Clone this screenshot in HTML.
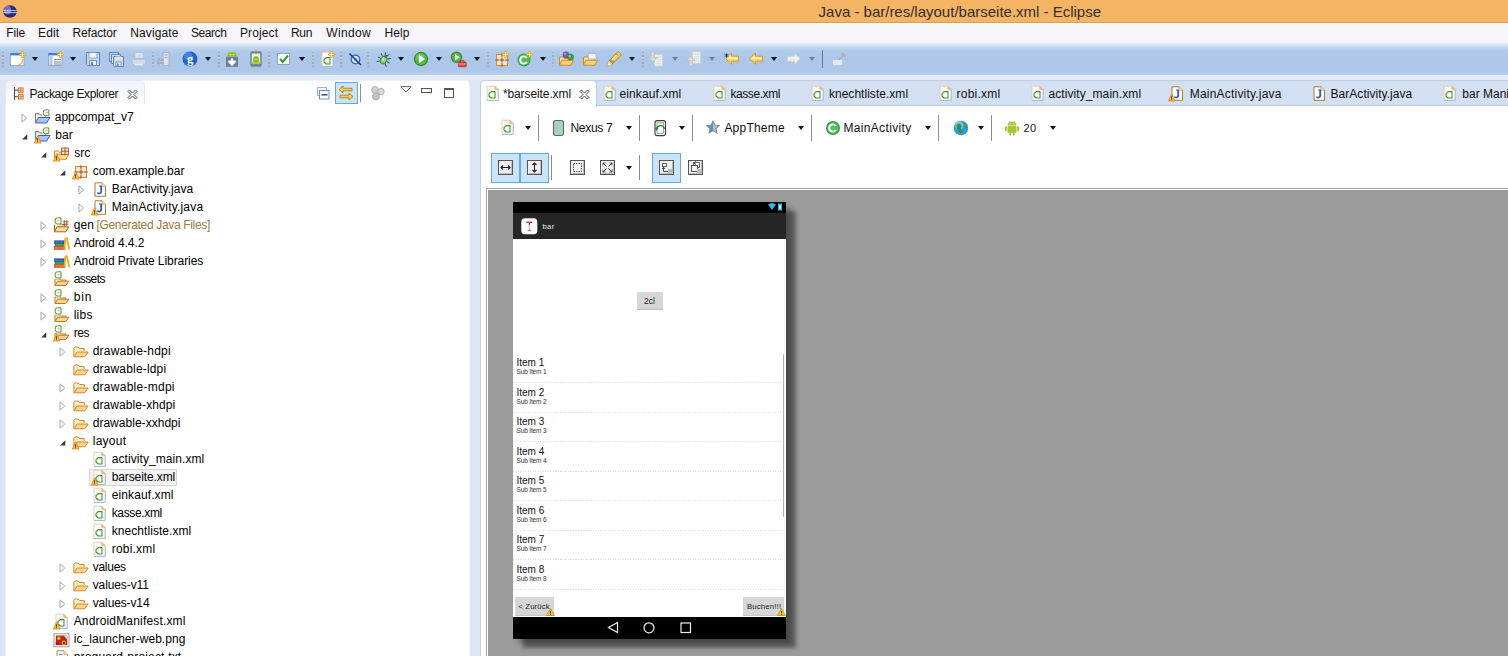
<!DOCTYPE html>
<html lang="en"><head><meta charset="utf-8"><title>Java - bar/res/layout/barseite.xml - Eclipse</title>
<style>
html,body{margin:0;padding:0}
body{width:1508px;height:656px;overflow:hidden;position:relative;background:#dde5f6;font-family:"Liberation Sans", sans-serif;font-size:12px}
#root{position:absolute;left:0;top:0;width:1508px;height:656px;overflow:hidden}
#root div,#root span{position:absolute}
.t{white-space:nowrap;display:block}
svg{display:block;overflow:visible}
</style></head><body><div id="root">
<div style="left:0px;top:0px;width:1508px;height:656px;background:#dde5f6"></div>
<div style="left:0px;top:0px;width:1508px;height:22px;background:#f4b463"></div>
<div style="left:0px;top:22px;width:1508px;height:1px;background:#cfa552"></div>
<div style="left:3px;top:5px;line-height:0"><svg width="14" height="13" viewBox="0 0 14 13"><ellipse cx="7" cy="6.5" rx="6.8" ry="6.2" fill="#2b2a80"/><ellipse cx="4.5" cy="5" rx="3.6" ry="4.2" fill="#8f86cf" opacity=".75"/><path d="M.3 5.6h13.4M.3 7.6h13.4" stroke="#dfe6ff" stroke-width=".8"/></svg></div>
<span id="t1" class="t" style="left:818.55px;top:4.00px;height:16px;line-height:16px;font-size:15px;color:#303030;letter-spacing:-0.003px;">Java - bar/res/layout/barseite.xml - Eclipse</span>
<div style="left:0px;top:23px;width:1508px;height:19px;background:#f6f6fb"></div>
<span id="t2" class="t" style="left:6.199999999999999px;top:25.04px;height:16px;line-height:16px;font-size:12px;color:#111;letter-spacing:-0.081px;">File</span>
<span id="t3" class="t" style="left:38.0px;top:25.04px;height:16px;line-height:16px;font-size:12px;color:#111;letter-spacing:0.137px;">Edit</span>
<span id="t4" class="t" style="left:72.5px;top:25.04px;height:16px;line-height:16px;font-size:12px;color:#111;letter-spacing:-0.151px;">Refactor</span>
<span id="t5" class="t" style="left:130.20000000000002px;top:25.04px;height:16px;line-height:16px;font-size:12px;color:#111;letter-spacing:0.132px;">Navigate</span>
<span id="t6" class="t" style="left:190.9px;top:25.04px;height:16px;line-height:16px;font-size:12px;color:#111;letter-spacing:-0.406px;">Search</span>
<span id="t7" class="t" style="left:240.0px;top:25.04px;height:16px;line-height:16px;font-size:12px;color:#111;letter-spacing:0.107px;">Project</span>
<span id="t8" class="t" style="left:290.9px;top:25.04px;height:16px;line-height:16px;font-size:12px;color:#111;letter-spacing:-0.258px;">Run</span>
<span id="t9" class="t" style="left:326.2px;top:25.04px;height:16px;line-height:16px;font-size:12px;color:#111;letter-spacing:0.363px;">Window</span>
<span id="t10" class="t" style="left:384.4px;top:25.04px;height:16px;line-height:16px;font-size:12px;color:#111;letter-spacing:0.137px;">Help</span>
<div style="left:0px;top:42px;width:1508px;height:33px;background:linear-gradient(to bottom,#f2f4fb 0,#dfe7f6 2px,#c8d8f0 5px,#b5cdec 8px,#adc7ea 12px,#adc7ea 29px,#bcd0ed 33px)"></div>
<div style="left:0px;top:75px;width:1508px;height:5px;background:#e6ebf8"></div>
<div style="left:2px;top:51.5px;width:1.5px;height:16px;opacity:.85;background:repeating-linear-gradient(to bottom,#b5a58f 0 1.500px,transparent 1.500px 3.500px)"></div>
<div style="left:10px;top:51px;line-height:0"><svg width="16" height="16" viewBox="0 0 16 16"><rect x=".5" y="2.5" width="13.5" height="12" fill="#fdfdff" stroke="#9aa7bd" stroke-width="1"/><rect x=".5" y="2" width="13.5" height="2.4" fill="#3d7fd0"/><path d="M13 8 Q13 13 8 14.5" stroke="#e8b030" stroke-width="1.2" fill="none"/><path d="M12.5 0v7M9 3.5h7" stroke="#e6a817" stroke-width="2.2"/><path d="M12.5 1v5M10 3.5h5" stroke="#fff2a8" stroke-width=".9"/></svg></div>
<div style="left:32px;top:57px;width:0;height:0;border-left:3.5px solid transparent;border-right:3.5px solid transparent;border-top:4px solid #111"></div>
<div style="left:48px;top:51px;line-height:0"><svg width="16" height="16" viewBox="0 0 16 16"><rect x=".5" y="2.5" width="13.5" height="12" fill="#fdfdff" stroke="#9aa7bd" stroke-width="1"/><rect x=".5" y="2" width="13.5" height="2.4" fill="#3d7fd0"/><rect x="1.5" y="5" width="3" height="9" fill="#a9c8ee"/><path d="M6 8.5h7M6 11h7M6 13h7" stroke="#7b8496" stroke-width="1"/><path d="M12.5 0v7M9 3.5h7" stroke="#e6a817" stroke-width="2.2"/><path d="M12.5 1v5M10 3.5h5" stroke="#fff2a8" stroke-width=".9"/></svg></div>
<div style="left:70px;top:57px;width:0;height:0;border-left:3.5px solid transparent;border-right:3.5px solid transparent;border-top:4px solid #111"></div>
<div style="left:85px;top:51px;line-height:0"><svg width="16" height="16" viewBox="0 0 16 16"><path d="M1.5 1.5h13v13h-12l-1-1z" fill="#c9d8ee" stroke="#5f83b5" stroke-width="1"/><rect x="4" y="1.5" width="8" height="5.5" fill="#f4f1ee" stroke="#5f83b5" stroke-width=".6"/><rect x="4.5" y="9.5" width="7" height="5" fill="#e9eef7" stroke="#5f83b5" stroke-width=".8"/><rect x="6" y="11" width="2" height="3" fill="#5f83b5"/></svg></div>
<div style="left:108px;top:51px;line-height:0"><svg width="16" height="16" viewBox="0 0 16 16"><path d="M1.5 1.5h9v9h-9z" fill="#d7e2f3" stroke="#5f83b5" stroke-width="1"/><path d="M3.5 3.5h9v9h-9z" fill="#d7e2f3" stroke="#5f83b5" stroke-width="1"/><path d="M5.5 5.5h10v10h-9l-1-1z" fill="#c9d8ee" stroke="#5f83b5" stroke-width="1"/><rect x="7.5" y="5.5" width="6" height="3.5" fill="#f1e4d6"/><rect x="8" y="11" width="5" height="4.5" fill="#e9eef7" stroke="#5f83b5" stroke-width=".7"/><rect x="9" y="12.5" width="1.6" height="2.6" fill="#5f83b5"/></svg></div>
<div style="left:131px;top:51px;line-height:0"><svg width="16" height="16" viewBox="0 0 16 16"><g opacity=".75"><rect x="4" y="1.5" width="8" height="6" fill="#f4f6fa" stroke="#b7c0cf"/><path d="M6 4h4M6 6h4" stroke="#c0c6d2"/><path d="M1.5 8.5h13v5h-13z" fill="#dfe4ec" stroke="#bcc4d1"/><rect x="3.5" y="12" width="9" height="2.5" fill="#f6f7fa" stroke="#c3cad6" stroke-width=".7"/></g></svg></div>
<div style="left:152px;top:51.5px;width:1.5px;height:16px;opacity:.85;background:repeating-linear-gradient(to bottom,#b5a58f 0 1.500px,transparent 1.500px 3.500px)"></div>
<div style="left:156px;top:51px;line-height:0"><svg width="16" height="16" viewBox="0 0 16 16"><g opacity=".8"><rect x="7" y="1.5" width="6" height="13" fill="#e8ebf0" stroke="#a8afba"/><path d="M8.5 4h3M8.5 6.5h3" stroke="#9ba3af"/><path d="M1 9h7M1 12h7" stroke="#9aa2ae" stroke-width="1.6"/><path d="M3 7v8" stroke="#a8afba" stroke-width="1.4"/></g></svg></div>
<div style="left:182px;top:51px;line-height:0"><svg width="16" height="16" viewBox="0 0 16 16"><circle cx="8" cy="8" r="7.5" fill="#1f63c4"/><circle cx="6" cy="5" r="4" fill="#5d9cec" opacity=".55"/><text x="8" y="12.2" font-family="Liberation Serif, serif" font-size="12.5" font-weight="bold" fill="#fff" text-anchor="middle">g</text></svg></div>
<div style="left:205px;top:57px;width:0;height:0;border-left:3.5px solid transparent;border-right:3.5px solid transparent;border-top:4px solid #111"></div>
<div style="left:218px;top:51.5px;width:1.5px;height:16px;opacity:.85;background:repeating-linear-gradient(to bottom,#b5a58f 0 1.500px,transparent 1.500px 3.500px)"></div>
<div style="left:224px;top:51px;line-height:0"><svg width="16" height="16" viewBox="0 0 16 16"><path d="M3 5.5a5 4.5 0 0 1 10 0z" fill="#97c024"/><path d="M4.5 1l1.2 1.8M11.5 1l-1.2 1.8" stroke="#97c024" stroke-width=".8"/><rect x="2" y="5.800" width="12" height="10" fill="#6d7d90"/><circle cx="6.300" cy="3.600" r=".6" fill="#fff"/><circle cx="9.700" cy="3.600" r=".6" fill="#fff"/><path d="M8 7.5v5M5 10.5l3 3.2 3-3.2z" stroke="#fff" stroke-width="2" fill="#fff" stroke-linejoin="round"/></svg></div>
<div style="left:248px;top:51px;line-height:0"><svg width="16" height="16" viewBox="0 0 16 16"><rect x="2.300" y=".3" width="11.400" height="15.400" rx="1.600" fill="#76838f"/><rect x="3.8" y="2.5" width="8.4" height="10" fill="#e9f1d9"/><path d="M5 8a3 2.8 0 0 1 6 0z" fill="#8bbd1f"/><rect x="5" y="8.4" width="6" height="3" fill="#8bbd1f"/><rect x="3.8" y="11" width="8.4" height="1.5" fill="#a6ce39"/></svg></div>
<div style="left:268px;top:51.5px;width:1.5px;height:16px;opacity:.85;background:repeating-linear-gradient(to bottom,#b5a58f 0 1.500px,transparent 1.500px 3.500px)"></div>
<div style="left:276px;top:51px;line-height:0"><svg width="16" height="16" viewBox="0 0 16 16"><rect x="1.5" y="2.5" width="12" height="11" fill="#fff" stroke="#8fa0bb"/><path d="M4 8l2.7 3L12 4.5" stroke="#2aa02a" stroke-width="2" fill="none"/></svg></div>
<div style="left:299px;top:57px;width:0;height:0;border-left:3.5px solid transparent;border-right:3.5px solid transparent;border-top:4px solid #111"></div>
<div style="left:312px;top:51.5px;width:1.5px;height:16px;opacity:.85;background:repeating-linear-gradient(to bottom,#b5a58f 0 1.500px,transparent 1.500px 3.500px)"></div>
<div style="left:319px;top:51px;line-height:0"><svg width="16" height="16" viewBox="0 0 16 16"><path d="M3 1.200h8l3.200 3.200v11h-11.200z" fill="#fdfeff"/><path d="M3 15.400v-14.200h8" fill="none" stroke="#ecc4a8" stroke-width=".9"/><path d="M14.200 4.400v11h-11.200" fill="none" stroke="#9fb2d6" stroke-width="1"/><path d="M10.800 1.200v3.400h3.400z" fill="#f8b878" stroke="#f0a050" stroke-width=".6"/><path d="M11 6.600h-3.800l-2.200 2v2.400l2.200 2h3.800z" fill="none" stroke="#3f8f1f" stroke-width="1.050" stroke-linejoin="round"/><path d="M12.5 0v7M9 3.5h7" stroke="#e6a817" stroke-width="2.2"/><path d="M12.5 1v5M10 3.5h5" stroke="#fff2a8" stroke-width=".9"/></svg></div>
<div style="left:340px;top:51.5px;width:1.5px;height:16px;opacity:.85;background:repeating-linear-gradient(to bottom,#b5a58f 0 1.500px,transparent 1.500px 3.500px)"></div>
<div style="left:347px;top:51px;line-height:0"><svg width="16" height="16" viewBox="0 0 16 16"><circle cx="8.5" cy="8.5" r="4.2" fill="#dfeaf8" stroke="#3f6fb5" stroke-width="1.6"/><circle cx="8.5" cy="8.5" r="1.6" fill="#7aa2da"/><path d="M2.5 2.5l11.5 11.5" stroke="#1f3a8a" stroke-width="1.5"/></svg></div>
<div style="left:367px;top:51.5px;width:1.5px;height:16px;opacity:.85;background:repeating-linear-gradient(to bottom,#b5a58f 0 1.500px,transparent 1.500px 3.500px)"></div>
<div style="left:376px;top:51px;line-height:0"><svg width="16" height="16" viewBox="0 0 16 16"><g transform="rotate(28 8 8.5)"><path d="M5.300 6.500L2.500 4.500M5 9H1.500M5.300 11.500l-2.800 2.300M10.700 6.500l2.800-2M11 9h3.500M10.700 11.500l2.800 2.300M7 4L5.800 1.500M9 4l1.200-2.500" stroke="#1f4f5f" stroke-width=".9" fill="none"/><ellipse cx="8" cy="9.300" rx="3" ry="4" fill="#8fd070" stroke="#2f6f3a" stroke-width=".8"/><circle cx="8" cy="4.800" r="1.600" fill="#3f7f4a"/><ellipse cx="7.300" cy="8.500" rx="1" ry="1.800" fill="#e0f5c8" opacity=".85"/></g></svg></div>
<div style="left:398px;top:57px;width:0;height:0;border-left:3.5px solid transparent;border-right:3.5px solid transparent;border-top:4px solid #111"></div>
<div style="left:413px;top:51px;line-height:0"><svg width="16" height="16" viewBox="0 0 16 16"><circle cx="8" cy="8" r="7.200" fill="#2e8b35"/><circle cx="8" cy="8" r="5.900" fill="#55b848"/><circle cx="7" cy="6" r="3.500" fill="#8fd67a" opacity=".5"/><path d="M6 3.800v8.400l6-4.200z" fill="#fff"/></svg></div>
<div style="left:436px;top:57px;width:0;height:0;border-left:3.5px solid transparent;border-right:3.5px solid transparent;border-top:4px solid #111"></div>
<div style="left:450px;top:51px;line-height:0"><svg width="16" height="16" viewBox="0 0 16 16"><circle cx="6.500" cy="6.300" r="5.700" fill="#2e8b35"/><circle cx="6.500" cy="6.300" r="4.500" fill="#55b848"/><path d="M5 3v6.600l4.800-3.300z" fill="#fff"/><rect x="8.300" y="11" width="8" height="4.800" rx=".8" fill="#e0453a" stroke="#a82018" stroke-width=".6"/><path d="M10.500 11v-1.300h3.500v1.300" stroke="#c0281e" fill="none" stroke-width=".9"/><path d="M8.300 13h8" stroke="#f8c0b8" stroke-width=".8"/></svg></div>
<div style="left:474px;top:57px;width:0;height:0;border-left:3.5px solid transparent;border-right:3.5px solid transparent;border-top:4px solid #111"></div>
<div style="left:487px;top:51.5px;width:1.5px;height:16px;opacity:.85;background:repeating-linear-gradient(to bottom,#b5a58f 0 1.500px,transparent 1.500px 3.500px)"></div>
<div style="left:493px;top:51px;line-height:0"><svg width="16" height="16" viewBox="0 0 16 16"><rect x="3.500" y="3.500" width="11" height="11" fill="#f3dccb" stroke="#e08a1e" stroke-width="1"/><path d="M9 2.300v13.400M2.300 9h13.400" stroke="#8a4a1e" stroke-width="1"/><path d="M6.200 4v10M11.800 4v10M4 6.200h10M4 11.800h10" stroke="#f9efe2" stroke-width=".6"/><path d="M12.5 0v7M9 3.5h7" stroke="#e6a817" stroke-width="2.2"/><path d="M12.5 1v5M10 3.5h5" stroke="#fff2a8" stroke-width=".9"/></svg></div>
<div style="left:517px;top:51px;line-height:0"><svg width="16" height="16" viewBox="0 0 16 16"><circle cx="7" cy="9" r="6.5" fill="#2f9e3f"/><circle cx="7" cy="9" r="5.4" fill="#4fbf5a"/><path d="M9.8 7a3.6 3.6 0 1 0 0 4" stroke="#fff" stroke-width="1.9" fill="none"/><path d="M12.5 0v7M9 3.5h7" stroke="#e6a817" stroke-width="2.2"/><path d="M12.5 1v5M10 3.5h5" stroke="#fff2a8" stroke-width=".9"/></svg></div>
<div style="left:540px;top:57px;width:0;height:0;border-left:3.5px solid transparent;border-right:3.5px solid transparent;border-top:4px solid #111"></div>
<div style="left:552px;top:51.5px;width:1.5px;height:16px;opacity:.85;background:repeating-linear-gradient(to bottom,#b5a58f 0 1.500px,transparent 1.500px 3.500px)"></div>
<div style="left:558px;top:51px;line-height:0"><svg width="16" height="16" viewBox="0 0 16 16"><path d="M1.500 13.500v-7.500h3.800l1.200 1.200h5.500v2" fill="#fbe3a0" stroke="#d4881e"/><path d="M1.500 14.200l2.300-5h11.700l-2.600 5z" fill="#f9d27a" stroke="#d4881e" stroke-linejoin="round"/><circle cx="8" cy="3.800" r="3.100" fill="#7a5ab8" stroke="#5a3f9a" stroke-width=".5"/><circle cx="7.200" cy="3" r="1.200" fill="#b8a0e0" opacity=".7"/><circle cx="12.500" cy="6" r="3.100" fill="#3f9e45" stroke="#2a7a2a" stroke-width=".5"/><circle cx="11.800" cy="5.200" r="1.200" fill="#9fdc9a" opacity=".7"/></svg></div>
<div style="left:582px;top:51px;line-height:0"><svg width="16" height="16" viewBox="0 0 16 16"><path d="M1.500 13.500v-7.500h3.800l1.200 1.200h5.500v2" fill="#fbe3a0" stroke="#d4881e"/><path d="M1.500 14.200l2.300-5h11.700l-2.600 5z" fill="#f9d27a" stroke="#d4881e" stroke-linejoin="round"/><rect x="6.500" y="2.500" width="7.500" height="5.500" fill="#f4f6fb" stroke="#a9b6d0" stroke-width=".8"/><path d="M7 2a3.500 2 0 0 1 6.500 0" fill="#c9c4e4" stroke="#a9a4cc" stroke-width=".6"/></svg></div>
<div style="left:606px;top:51px;line-height:0"><svg width="16" height="16" viewBox="0 0 16 16"><path d="M1 15.200l1.500-4.700L11.200 1.300a1.400 1.400 0 0 1 2 0l1.500 1.500a1.400 1.400 0 0 1 0 2L5.700 13.700z" fill="#f7c64a" stroke="#b9831e" stroke-width=".9" stroke-linejoin="round"/><path d="M3.400 9.400l3.200 3.200 1.700-1.700-3.200-3.200z" fill="#9a9a9a" stroke="#777" stroke-width=".5"/><path d="M1 15.200l1.500-4.700 3.200 3.200z" fill="#fff8dc" stroke="#d8b860" stroke-width=".5"/><path d="M10.200 3.300l1 1" stroke="#3f5fb5" stroke-width="1.400"/><path d="M6 9l5-5.300" stroke="#fde9a8" stroke-width="1.200"/></svg></div>
<div style="left:629px;top:57px;width:0;height:0;border-left:3.5px solid transparent;border-right:3.5px solid transparent;border-top:4px solid #111"></div>
<div style="left:642px;top:51.5px;width:1.5px;height:16px;opacity:.85;background:repeating-linear-gradient(to bottom,#b5a58f 0 1.500px,transparent 1.500px 3.500px)"></div>
<div style="left:648px;top:51px;line-height:0"><svg width="16" height="16" viewBox="0 0 16 16"><g opacity=".9"><rect x="6.500" y="3.500" width="8" height="11.500" fill="#f3f3ee" stroke="#d3d3cb"/><path d="M8 6h5M8 8.200h5M8 10.400h5M8 12.600h5" stroke="#d9d9d2" stroke-width=".8"/><path d="M3 .8h3.500v5.700h2.500l-4.200 4.500L.6 6.500H3z" fill="#dcdcd6" stroke="#bdbdb6" stroke-width=".8" stroke-linejoin="round"/></g></svg></div>
<div style="left:672px;top:57px;width:0;height:0;border-left:3.5px solid transparent;border-right:3.5px solid transparent;border-top:4px solid #78808c"></div>
<div style="left:686px;top:51px;line-height:0"><svg width="16" height="16" viewBox="0 0 16 16"><g opacity=".9"><rect x="6.500" y=".8" width="8" height="11.500" fill="#f3f3ee" stroke="#d3d3cb"/><path d="M8 3.300h5M8 5.500h5M8 7.700h5M8 9.900h5" stroke="#d9d9d2" stroke-width=".8"/><path d="M3 15.200h3.500V9.500h2.500L4.800 5 .6 9.500H3z" fill="#dcdcd6" stroke="#bdbdb6" stroke-width=".8" stroke-linejoin="round"/></g></svg></div>
<div style="left:709px;top:57px;width:0;height:0;border-left:3.5px solid transparent;border-right:3.5px solid transparent;border-top:4px solid #78808c"></div>
<div style="left:724px;top:51px;line-height:0"><svg width="16" height="16" viewBox="0 0 16 16"><path d="M1.500 7.700l6-5.500v3h7v5h-7v3z" fill="#fbd968" stroke="#dc9a1c" stroke-width="1" stroke-linejoin="round"/><path d="M3.300 7.600l3.500-3.200v2h6.700v1.500h-8z" fill="#fff6d2" opacity=".9"/><path d="M2.500 2.300v4.400M.6 3.300l3.800 2.400M4.400 3.300L.6 5.700" stroke="#1f3a8a" stroke-width=".9"/></svg></div>
<div style="left:748px;top:51px;line-height:0"><svg width="16" height="16" viewBox="0 0 16 16"><path d="M1.500 7.700l6-5.500v3h7v5h-7v3z" fill="#fbd968" stroke="#dc9a1c" stroke-width="1" stroke-linejoin="round"/><path d="M3.300 7.600l3.500-3.200v2h6.700v1.500h-8z" fill="#fff6d2" opacity=".9"/></svg></div>
<div style="left:771px;top:57px;width:0;height:0;border-left:3.5px solid transparent;border-right:3.5px solid transparent;border-top:4px solid #111"></div>
<div style="left:786px;top:51px;line-height:0"><svg width="16" height="16" viewBox="0 0 16 16"><path d="M14.500 7.700l-6-5.500v3h-7v5h7v3z" fill="#efefea" stroke="#cfd2d4" stroke-width="1" stroke-linejoin="round"/></svg></div>
<div style="left:809px;top:57px;width:0;height:0;border-left:3.5px solid transparent;border-right:3.5px solid transparent;border-top:4px solid #78808c"></div>
<div style="left:822px;top:50px;width:1px;height:18px;background:#6c7688"></div>
<div style="left:831px;top:51px;line-height:0"><svg width="16" height="16" viewBox="0 0 16 16"><g opacity=".75"><rect x="1.5" y="8.5" width="10" height="6" fill="#f1f3f6" stroke="#c2c7cf"/><path d="M8 9l5-6M10.5 2l4 3.5" stroke="#a7adb8" stroke-width="1.8"/></g></svg></div>
<div style="left:5px;top:80px;width:465px;height:600px;background:#fff;border-radius:5px 5px 0 0;border:1px solid #eef1f9;box-sizing:border-box"></div>
<div style="left:5px;top:80px;width:140px;height:24px;background:linear-gradient(to bottom,#f1f3fb,#fcfcff);border:1px solid #e3e8f4;border-bottom:none;border-radius:5px 6px 0 0;box-sizing:border-box"></div>
<div style="left:13px;top:86px;line-height:0"><svg width="12" height="15" viewBox="0 0 12 15"><path d="M1.500 1.200v12.600M1.500 4.200h3.600M1.500 10.700h3.600" stroke="#4a4a4a" stroke-width="1" fill="none"/><rect x="5.500" y="1.900" width="4.600" height="4.600" fill="#fbe3c8" stroke="#c87428" stroke-width=".9"/><path d="M7.800 1.900v4.600M5.500 4.200h4.600" stroke="#c87428" stroke-width=".8"/><rect x="5.500" y="8.400" width="4.600" height="4.600" fill="#fbe3c8" stroke="#c87428" stroke-width=".9"/><path d="M7.800 8.400v4.600M5.500 10.700h4.600" stroke="#c87428" stroke-width=".8"/></svg></div>
<span id="t11" class="t" style="left:29.4px;top:86.04px;height:16px;line-height:16px;font-size:12px;color:#111;letter-spacing:-0.368px;">Package Explorer</span>
<div style="left:126.5px;top:88.5px;line-height:0"><svg width="11" height="11" viewBox="0 0 11 11"><path d="M1 2.5L2.5 1L5.5 4L8.5 1L10 2.5L7 5.5L10 8.5L8.5 10L5.5 7L2.5 10L1 8.5L4 5.5Z" fill="#fff" stroke="#3c3c3c" stroke-width=".9"/></svg></div>
<div style="left:316px;top:86px;line-height:0"><svg width="14" height="14" viewBox="0 0 14 14"><rect x="1.5" y="1.5" width="9" height="8" fill="#fff" stroke="#9fb4d6"/><rect x="3.5" y="4.5" width="9.5" height="8.500" fill="#fff" stroke="#6f8fc4"/><path d="M5.5 8.800h6" stroke="#1f3a8a" stroke-width="1.400"/></svg></div>
<div style="left:335px;top:82px;width:23px;height:22px;background:#cbe3f9;border:1px solid #66a7e8;box-sizing:border-box"></div>
<div style="left:338px;top:85px;line-height:0"><svg width="16" height="16" viewBox="0 0 16 16"><path d="M1 4.5l4-3.5v2.2h9v2.6h-9v2.2z" fill="#f7cf52" stroke="#b07d12" stroke-width=".9" stroke-linejoin="round"/><path d="M15 11.5l-4-3.5v2.2h-9v2.6h9v2.2z" fill="#f7cf52" stroke="#b07d12" stroke-width=".9" stroke-linejoin="round"/></svg></div>
<div style="left:360px;top:84px;width:1px;height:18px;background:#8f8f86"></div>
<div style="left:370px;top:85px;line-height:0"><svg width="16" height="16" viewBox="0 0 16 16"><g opacity=".85"><circle cx="5" cy="5" r="3.4" fill="#c5c7ca" stroke="#a4a7ab"/><circle cx="11" cy="6.5" r="3.2" fill="#cfd1d4" stroke="#a4a7ab"/><circle cx="6" cy="11.5" r="3.4" fill="#b9bbbf" stroke="#9a9da2"/></g></svg></div>
<div style="left:400px;top:86px;line-height:0"><svg width="12" height="7" viewBox="0 0 12 7"><path d="M.8.6h10.4L6 6z" fill="#fff" stroke="#555" stroke-width=".9"/></svg></div>
<div style="left:421px;top:88px;width:10.5px;height:4.5px;border:1px solid #5a505a;box-sizing:border-box;background:#fff"></div>
<div style="left:444px;top:88px;width:10px;height:10px;border:1px solid #5a505a;border-top:2px solid #5a505a;box-sizing:border-box;background:#fff"></div>
<div style="left:21px;top:113.0px;line-height:0"><svg width="7" height="10" viewBox="0 0 7 10"><path d="M1 .9L5.8 5L1 9.1z" fill="#fff" stroke="#a6a6a6" stroke-width="1"/></svg></div>
<div style="left:33.5px;top:108.5px;line-height:0"><svg width="16" height="16" viewBox="0 0 16 16"><path d="M1.5 12.5v-8h3.5l1.5 1.5h5v2" fill="#fdf1c4" stroke="#4a6cc8" stroke-width=".9"/><path d="M1.5 14l2.8-5.500h11.700l-3.5 5.500z" fill="#a9c6f2" stroke="#2f50b8" stroke-width=".9" stroke-linejoin="round"/><path d="M2.5 5.200h2.500M6.5 6.700h4" stroke="#e3a83a" stroke-width=".8"/><rect x="8.3" y="0" width="7" height="7.5" fill="#fff"/><path d="M14.8 .9h-3.500a2 2 0 0 0-2 2v1.800a2 2 0 0 0 2 2h3.500z" fill="none" stroke="#4e9a1e" stroke-width="1"/><path d="M11.5 3.700h2.5" stroke="#b98a3e" stroke-width=".7"/></svg></div>
<span id="t12" class="t" style="left:54.699999999999996px;top:109.04px;height:16px;line-height:16px;font-size:12px;color:#000;letter-spacing:0.024px;">appcompat_v7</span>
<div style="left:21px;top:132.5px;line-height:0"><svg width="7" height="7" viewBox="0 0 7 7"><path d="M6.300 1.300v5.200h-5.200z" fill="#3c3c3c"/></svg></div>
<div style="left:33.5px;top:126.5px;line-height:0"><svg width="16" height="16" viewBox="0 0 16 16"><path d="M1.5 12.5v-8h3.5l1.5 1.5h5v2" fill="#fdf1c4" stroke="#4a6cc8" stroke-width=".9"/><path d="M1.5 14l2.8-5.500h11.700l-3.5 5.500z" fill="#a9c6f2" stroke="#2f50b8" stroke-width=".9" stroke-linejoin="round"/><path d="M2.5 5.200h2.500M6.5 6.700h4" stroke="#e3a83a" stroke-width=".8"/><rect x="8.3" y="0" width="7" height="7.5" fill="#fff"/><path d="M14.8 .9h-3.500a2 2 0 0 0-2 2v1.800a2 2 0 0 0 2 2h3.500z" fill="none" stroke="#4e9a1e" stroke-width="1"/><path d="M11.5 3.700h2.5" stroke="#b98a3e" stroke-width=".7"/><path d="M.4 16L3.7 8.8L7 16z" fill="#f9c24e" stroke="#e08a1e" stroke-width=".9" stroke-linejoin="round"/><rect x="3.1" y="11.3" width=".9" height="2.4" fill="#3a2a00"/><rect x="3.1" y="14.2" width=".9" height=".9" fill="#3a2a00"/></svg></div>
<span id="t13" class="t" style="left:55.3px;top:127.04px;height:16px;line-height:16px;font-size:12px;color:#000;">bar</span>
<div style="left:40px;top:150.5px;line-height:0"><svg width="7" height="7" viewBox="0 0 7 7"><path d="M6.300 1.300v5.200h-5.200z" fill="#3c3c3c"/></svg></div>
<div style="left:52.5px;top:144.5px;line-height:0"><svg width="16" height="16" viewBox="0 0 16 16"><path d="M1.500 14v-8h3.800l1.200 1.200h5.500v1.800" fill="#fdf0c4" stroke="#e08a1e"/><path d="M1.500 14.300l2.400-5h11.800l-2.800 5z" fill="#fbdf90" stroke="#e08a1e" stroke-linejoin="round"/><rect x="8.500" y="3" width="7" height="6.500" fill="#f3dccb" stroke="#a0522d" stroke-width=".8"/><path d="M12 2.300v7.800M7.800 6.200h8.200" stroke="#8a4a1e" stroke-width=".8"/><path d="M.4 16L3.7 8.8L7 16z" fill="#f9c24e" stroke="#e08a1e" stroke-width=".9" stroke-linejoin="round"/><rect x="3.1" y="11.3" width=".9" height="2.4" fill="#3a2a00"/><rect x="3.1" y="14.2" width=".9" height=".9" fill="#3a2a00"/></svg></div>
<span id="t14" class="t" style="left:74.3px;top:145.04px;height:16px;line-height:16px;font-size:12px;color:#000;">src</span>
<div style="left:59px;top:168.5px;line-height:0"><svg width="7" height="7" viewBox="0 0 7 7"><path d="M6.300 1.300v5.200h-5.200z" fill="#3c3c3c"/></svg></div>
<div style="left:71.5px;top:162.5px;line-height:0"><svg width="16" height="16" viewBox="0 0 16 16"><rect x="3.500" y="3.500" width="11" height="11" fill="#f3dccb" stroke="#e08a1e" stroke-width="1"/><path d="M9 2.300v13.400M2.300 9h13.400" stroke="#8a4a1e" stroke-width="1"/><path d="M6.200 4v10M11.800 4v10M4 6.200h10M4 11.800h10" stroke="#f9efe2" stroke-width=".6"/><path d="M.4 16L3.7 8.8L7 16z" fill="#f9c24e" stroke="#e08a1e" stroke-width=".9" stroke-linejoin="round"/><rect x="3.1" y="11.3" width=".9" height="2.4" fill="#3a2a00"/><rect x="3.1" y="14.2" width=".9" height=".9" fill="#3a2a00"/></svg></div>
<span id="t15" class="t" style="left:92.7px;top:163.04px;height:16px;line-height:16px;font-size:12px;color:#000;letter-spacing:-0.025px;">com.example.bar</span>
<div style="left:78px;top:185.0px;line-height:0"><svg width="7" height="10" viewBox="0 0 7 10"><path d="M1 .9L5.8 5L1 9.1z" fill="#fff" stroke="#a6a6a6" stroke-width="1"/></svg></div>
<div style="left:90.5px;top:180.5px;line-height:0"><svg width="16" height="16" viewBox="0 0 16 16"><path d="M4 1.800h7l3.500 3.500v10h-10.500z" fill="#fdfeff" stroke="#a87830" stroke-width="1"/><path d="M11 1.800v3.500h3.500" fill="#f6e3b8" stroke="#c89848" stroke-width=".7"/><path d="M10.200 5v5.700a2 2 0 0 1-3.700 .9" stroke="#2a5db0" stroke-width="1.800" fill="none"/><path d="M8 5h3" stroke="#2a5db0" stroke-width="1"/></svg></div>
<span id="t16" class="t" style="left:111.7px;top:181.04px;height:16px;line-height:16px;font-size:12px;color:#000;letter-spacing:0.017px;">BarActivity.java</span>
<div style="left:78px;top:203.0px;line-height:0"><svg width="7" height="10" viewBox="0 0 7 10"><path d="M1 .9L5.8 5L1 9.1z" fill="#fff" stroke="#a6a6a6" stroke-width="1"/></svg></div>
<div style="left:90.5px;top:198.5px;line-height:0"><svg width="16" height="16" viewBox="0 0 16 16"><path d="M4 1.800h7l3.500 3.500v10h-10.500z" fill="#fdfeff" stroke="#a87830" stroke-width="1"/><path d="M11 1.800v3.500h3.500" fill="#f6e3b8" stroke="#c89848" stroke-width=".7"/><path d="M10.200 5v5.700a2 2 0 0 1-3.700 .9" stroke="#2a5db0" stroke-width="1.800" fill="none"/><path d="M8 5h3" stroke="#2a5db0" stroke-width="1"/><path d="M.4 16L3.7 8.8L7 16z" fill="#f9c24e" stroke="#e08a1e" stroke-width=".9" stroke-linejoin="round"/><rect x="3.1" y="11.3" width=".9" height="2.4" fill="#3a2a00"/><rect x="3.1" y="14.2" width=".9" height=".9" fill="#3a2a00"/></svg></div>
<span id="t17" class="t" style="left:111.7px;top:199.04px;height:16px;line-height:16px;font-size:12px;color:#000;letter-spacing:0.182px;">MainActivity.java</span>
<div style="left:40px;top:221.0px;line-height:0"><svg width="7" height="10" viewBox="0 0 7 10"><path d="M1 .9L5.8 5L1 9.1z" fill="#fff" stroke="#a6a6a6" stroke-width="1"/></svg></div>
<div style="left:52.5px;top:216.5px;line-height:0"><svg width="16" height="16" viewBox="0 0 16 16"><path d="M1.500 14.500v-8h3.800l1.200 1.200h5.500v1.800" fill="#fdf0c4" stroke="#a8602a"/><path d="M1.500 14.800l2.400-5h11.800l-2.800 5z" fill="#fbdf90" stroke="#a8602a" stroke-linejoin="round"/><rect x="1" y="0" width="7.500" height="7.800" fill="#fff"/><path d="M8 .8h-3.600a2.200 2.200 0 0 0-2.200 2.200v1.800a2.200 2.200 0 0 0 2.200 2.200h3.600z" fill="none" stroke="#4e9a1e" stroke-width="1"/><path d="M4.300 3.800h2.300" stroke="#d88a2e" stroke-width=".8"/><path d="M11.300 3v6M13.800 3v6M9.800 4.800h5.700M9.800 7.200h5.700" stroke="#8a4a1e" stroke-width=".8"/></svg></div>
<span id="t18" class="t" style="left:73.7px;top:217.04px;height:16px;line-height:16px;font-size:12px;color:#000;letter-spacing:0.084px;">gen</span>
<span id="t19" class="t" style="left:96.5px;top:217.04px;height:16px;line-height:16px;font-size:12px;color:#a07a3e;letter-spacing:-0.330px;">[Generated Java Files]</span>
<div style="left:40px;top:239.0px;line-height:0"><svg width="7" height="10" viewBox="0 0 7 10"><path d="M1 .9L5.8 5L1 9.1z" fill="#fff" stroke="#a6a6a6" stroke-width="1"/></svg></div>
<div style="left:52.5px;top:234.5px;line-height:0"><svg width="16" height="16" viewBox="0 0 16 16"><rect x="1.500" y="5.800" width="10" height="2.800" fill="#2a5fb8" stroke="#1f3f8a" stroke-width=".5"/><rect x="2" y="8.600" width="9.500" height="2.600" fill="#2f9a5a" stroke="#1f6a3a" stroke-width=".5"/><rect x="1.500" y="11.200" width="10.500" height="3.300" fill="#e0642a" stroke="#a8401a" stroke-width=".5"/><path d="M3 7.200h7M3.500 9.900h6.500M3 12.800h7.500" stroke="#fff" stroke-width=".5" opacity=".55" stroke-dasharray="1 .7"/><path d="M11.300 14.300L12.300 4.500a1.300 1.300 0 0 1 1.500-1.500l1.500 7 .9 4.300" fill="none" stroke="#f0a818" stroke-width="1.700" stroke-linejoin="round"/><circle cx="12.800" cy="3.800" r="1.300" fill="#f5b830"/></svg></div>
<span id="t20" class="t" style="left:73.7px;top:235.04px;height:16px;line-height:16px;font-size:12px;color:#000;letter-spacing:-0.058px;">Android 4.4.2</span>
<div style="left:40px;top:257.0px;line-height:0"><svg width="7" height="10" viewBox="0 0 7 10"><path d="M1 .9L5.8 5L1 9.1z" fill="#fff" stroke="#a6a6a6" stroke-width="1"/></svg></div>
<div style="left:52.5px;top:252.5px;line-height:0"><svg width="16" height="16" viewBox="0 0 16 16"><rect x="1.500" y="5.800" width="10" height="2.800" fill="#2a5fb8" stroke="#1f3f8a" stroke-width=".5"/><rect x="2" y="8.600" width="9.500" height="2.600" fill="#2f9a5a" stroke="#1f6a3a" stroke-width=".5"/><rect x="1.500" y="11.200" width="10.500" height="3.300" fill="#e0642a" stroke="#a8401a" stroke-width=".5"/><path d="M3 7.200h7M3.500 9.900h6.500M3 12.800h7.500" stroke="#fff" stroke-width=".5" opacity=".55" stroke-dasharray="1 .7"/><path d="M11.300 14.300L12.300 4.500a1.300 1.300 0 0 1 1.500-1.500l1.500 7 .9 4.300" fill="none" stroke="#f0a818" stroke-width="1.700" stroke-linejoin="round"/><circle cx="12.800" cy="3.800" r="1.300" fill="#f5b830"/></svg></div>
<span id="t21" class="t" style="left:73.7px;top:253.04px;height:16px;line-height:16px;font-size:12px;color:#000;letter-spacing:-0.075px;">Android Private Libraries</span>
<div style="left:52.5px;top:270.5px;line-height:0"><svg width="16" height="16" viewBox="0 0 16 16"><path d="M2 14.300v-6.500h4.500l1.200 1.200h5.300v1.500" fill="#fdeec8" stroke="#c07a2a"/><path d="M2 14.500l2.600-4.300h11.200l-3 4.300z" fill="#fad490" stroke="#c07a2a" stroke-linejoin="round"/><rect x="1" y="0" width="7.500" height="7.800" fill="#fff"/><path d="M8 .8h-3.600a2.200 2.200 0 0 0-2.200 2.200v1.800a2.200 2.200 0 0 0 2.200 2.200h3.600z" fill="none" stroke="#4e9a1e" stroke-width="1"/><path d="M4.300 3.800h2.300" stroke="#d88a2e" stroke-width=".8"/></svg></div>
<span id="t22" class="t" style="left:73.7px;top:271.04px;height:16px;line-height:16px;font-size:12px;color:#000;letter-spacing:-0.598px;">assets</span>
<div style="left:40px;top:293.0px;line-height:0"><svg width="7" height="10" viewBox="0 0 7 10"><path d="M1 .9L5.8 5L1 9.1z" fill="#fff" stroke="#a6a6a6" stroke-width="1"/></svg></div>
<div style="left:52.5px;top:288.5px;line-height:0"><svg width="16" height="16" viewBox="0 0 16 16"><path d="M2 14.300v-6.500h4.500l1.200 1.200h5.300v1.500" fill="#fdeec8" stroke="#c07a2a"/><path d="M2 14.500l2.600-4.300h11.200l-3 4.300z" fill="#fad490" stroke="#c07a2a" stroke-linejoin="round"/><rect x="1" y="0" width="7.500" height="7.800" fill="#fff"/><path d="M8 .8h-3.600a2.200 2.200 0 0 0-2.200 2.200v1.800a2.200 2.200 0 0 0 2.200 2.200h3.600z" fill="none" stroke="#4e9a1e" stroke-width="1"/><path d="M4.300 3.800h2.300" stroke="#d88a2e" stroke-width=".8"/></svg></div>
<span id="t23" class="t" style="left:73.7px;top:289.04px;height:16px;line-height:16px;font-size:12px;color:#000;letter-spacing:0.842px;">bin</span>
<div style="left:40px;top:311.0px;line-height:0"><svg width="7" height="10" viewBox="0 0 7 10"><path d="M1 .9L5.8 5L1 9.1z" fill="#fff" stroke="#a6a6a6" stroke-width="1"/></svg></div>
<div style="left:52.5px;top:306.5px;line-height:0"><svg width="16" height="16" viewBox="0 0 16 16"><path d="M2 14.300v-6.500h4.500l1.200 1.200h5.300v1.500" fill="#fdeec8" stroke="#c07a2a"/><path d="M2 14.500l2.600-4.300h11.200l-3 4.300z" fill="#fad490" stroke="#c07a2a" stroke-linejoin="round"/><rect x="1" y="0" width="7.500" height="7.800" fill="#fff"/><path d="M8 .8h-3.600a2.200 2.200 0 0 0-2.200 2.200v1.800a2.200 2.200 0 0 0 2.200 2.200h3.600z" fill="none" stroke="#4e9a1e" stroke-width="1"/><path d="M4.300 3.800h2.300" stroke="#d88a2e" stroke-width=".8"/></svg></div>
<span id="t24" class="t" style="left:73.7px;top:307.04px;height:16px;line-height:16px;font-size:12px;color:#000;letter-spacing:0.261px;">libs</span>
<div style="left:40px;top:330.5px;line-height:0"><svg width="7" height="7" viewBox="0 0 7 7"><path d="M6.300 1.300v5.200h-5.200z" fill="#3c3c3c"/></svg></div>
<div style="left:52.5px;top:324.5px;line-height:0"><svg width="16" height="16" viewBox="0 0 16 16"><path d="M2 14.300v-6.500h4.500l1.200 1.200h5.300v1.500" fill="#fdeec8" stroke="#c07a2a"/><path d="M2 14.500l2.600-4.300h11.200l-3 4.300z" fill="#fad490" stroke="#c07a2a" stroke-linejoin="round"/><rect x="1" y="0" width="7.500" height="7.800" fill="#fff"/><path d="M8 .8h-3.600a2.200 2.200 0 0 0-2.200 2.200v1.800a2.200 2.200 0 0 0 2.200 2.200h3.600z" fill="none" stroke="#4e9a1e" stroke-width="1"/><path d="M4.300 3.800h2.300" stroke="#d88a2e" stroke-width=".8"/><path d="M.4 16L3.7 8.8L7 16z" fill="#f9c24e" stroke="#e08a1e" stroke-width=".9" stroke-linejoin="round"/><rect x="3.1" y="11.3" width=".9" height="2.4" fill="#3a2a00"/><rect x="3.1" y="14.2" width=".9" height=".9" fill="#3a2a00"/></svg></div>
<span id="t25" class="t" style="left:73.7px;top:325.04px;height:16px;line-height:16px;font-size:12px;color:#000;letter-spacing:-0.386px;">res</span>
<div style="left:59px;top:347.0px;line-height:0"><svg width="7" height="10" viewBox="0 0 7 10"><path d="M1 .9L5.8 5L1 9.1z" fill="#fff" stroke="#a6a6a6" stroke-width="1"/></svg></div>
<div style="left:71.5px;top:342.5px;line-height:0"><svg width="16" height="16" viewBox="0 0 16 16"><path d="M1.900 13.700v-8.300q0-1.400 1.400-1.400h2.800l1.500 1.500h4.600v2.500" fill="#fdeec8" stroke="#d8862a" stroke-width="1"/><path d="M1.900 13.800l3.200-4.800h11.100l-3.500 4.800z" fill="#fad490" stroke="#d8862a" stroke-width="1" stroke-linejoin="round"/></svg></div>
<span id="t26" class="t" style="left:92.7px;top:343.04px;height:16px;line-height:16px;font-size:12px;color:#000;letter-spacing:0.209px;">drawable-hdpi</span>
<div style="left:71.5px;top:360.5px;line-height:0"><svg width="16" height="16" viewBox="0 0 16 16"><path d="M1.900 13.700v-8.300q0-1.400 1.400-1.400h2.800l1.500 1.500h4.600v2.500" fill="#fdeec8" stroke="#d8862a" stroke-width="1"/><path d="M1.900 13.800l3.200-4.800h11.100l-3.500 4.800z" fill="#fad490" stroke="#d8862a" stroke-width="1" stroke-linejoin="round"/></svg></div>
<span id="t27" class="t" style="left:92.7px;top:361.04px;height:16px;line-height:16px;font-size:12px;color:#000;letter-spacing:0.169px;">drawable-ldpi</span>
<div style="left:59px;top:383.0px;line-height:0"><svg width="7" height="10" viewBox="0 0 7 10"><path d="M1 .9L5.8 5L1 9.1z" fill="#fff" stroke="#a6a6a6" stroke-width="1"/></svg></div>
<div style="left:71.5px;top:378.5px;line-height:0"><svg width="16" height="16" viewBox="0 0 16 16"><path d="M1.900 13.700v-8.300q0-1.400 1.400-1.400h2.800l1.500 1.500h4.600v2.500" fill="#fdeec8" stroke="#d8862a" stroke-width="1"/><path d="M1.900 13.800l3.200-4.800h11.100l-3.500 4.800z" fill="#fad490" stroke="#d8862a" stroke-width="1" stroke-linejoin="round"/></svg></div>
<span id="t28" class="t" style="left:92.7px;top:379.04px;height:16px;line-height:16px;font-size:12px;color:#000;letter-spacing:0.258px;">drawable-mdpi</span>
<div style="left:59px;top:401.0px;line-height:0"><svg width="7" height="10" viewBox="0 0 7 10"><path d="M1 .9L5.8 5L1 9.1z" fill="#fff" stroke="#a6a6a6" stroke-width="1"/></svg></div>
<div style="left:71.5px;top:396.5px;line-height:0"><svg width="16" height="16" viewBox="0 0 16 16"><path d="M1.900 13.700v-8.300q0-1.400 1.400-1.400h2.800l1.500 1.500h4.600v2.500" fill="#fdeec8" stroke="#d8862a" stroke-width="1"/><path d="M1.900 13.800l3.200-4.800h11.100l-3.500 4.800z" fill="#fad490" stroke="#d8862a" stroke-width="1" stroke-linejoin="round"/></svg></div>
<span id="t29" class="t" style="left:92.7px;top:397.04px;height:16px;line-height:16px;font-size:12px;color:#000;letter-spacing:0.085px;">drawable-xhdpi</span>
<div style="left:59px;top:419.0px;line-height:0"><svg width="7" height="10" viewBox="0 0 7 10"><path d="M1 .9L5.8 5L1 9.1z" fill="#fff" stroke="#a6a6a6" stroke-width="1"/></svg></div>
<div style="left:71.5px;top:414.5px;line-height:0"><svg width="16" height="16" viewBox="0 0 16 16"><path d="M1.900 13.700v-8.300q0-1.400 1.400-1.400h2.800l1.500 1.500h4.600v2.500" fill="#fdeec8" stroke="#d8862a" stroke-width="1"/><path d="M1.900 13.800l3.200-4.800h11.100l-3.500 4.800z" fill="#fad490" stroke="#d8862a" stroke-width="1" stroke-linejoin="round"/></svg></div>
<span id="t30" class="t" style="left:92.7px;top:415.04px;height:16px;line-height:16px;font-size:12px;color:#000;letter-spacing:0.029px;">drawable-xxhdpi</span>
<div style="left:59px;top:438.5px;line-height:0"><svg width="7" height="7" viewBox="0 0 7 7"><path d="M6.300 1.300v5.200h-5.200z" fill="#3c3c3c"/></svg></div>
<div style="left:71.5px;top:432.5px;line-height:0"><svg width="16" height="16" viewBox="0 0 16 16"><path d="M1.900 13.700v-8.300q0-1.400 1.400-1.400h2.800l1.500 1.500h4.600v2.500" fill="#fdeec8" stroke="#d8862a" stroke-width="1"/><path d="M1.900 13.800l3.200-4.800h11.100l-3.500 4.800z" fill="#fad490" stroke="#d8862a" stroke-width="1" stroke-linejoin="round"/><path d="M.4 16L3.7 8.8L7 16z" fill="#f9c24e" stroke="#e08a1e" stroke-width=".9" stroke-linejoin="round"/><rect x="3.1" y="11.3" width=".9" height="2.4" fill="#3a2a00"/><rect x="3.1" y="14.2" width=".9" height=".9" fill="#3a2a00"/></svg></div>
<span id="t31" class="t" style="left:92.7px;top:433.04px;height:16px;line-height:16px;font-size:12px;color:#000;letter-spacing:0.274px;">layout</span>
<div style="left:90.5px;top:450.5px;line-height:0"><svg width="16" height="16" viewBox="0 0 16 16"><path d="M3 1.200h8l3.200 3.200v11h-11.200z" fill="#fdfeff"/><path d="M3 15.400v-14.200h8" fill="none" stroke="#ecc4a8" stroke-width=".9"/><path d="M14.200 4.400v11h-11.200" fill="none" stroke="#9fb2d6" stroke-width="1"/><path d="M10.800 1.200v3.400h3.400z" fill="#f8b878" stroke="#f0a050" stroke-width=".6"/><path d="M11 6.600h-3.800l-2.200 2v2.400l2.200 2h3.800z" fill="none" stroke="#3f8f1f" stroke-width="1.050" stroke-linejoin="round"/></svg></div>
<span id="t32" class="t" style="left:111.7px;top:451.04px;height:16px;line-height:16px;font-size:12px;color:#000;letter-spacing:0.078px;">activity_main.xml</span>
<div style="left:89px;top:468.5px;width:88px;height:17px;background:#f3f3f3;border:1px solid #d6d6d6;box-sizing:border-box"></div>
<div style="left:90.5px;top:468.5px;line-height:0"><svg width="16" height="16" viewBox="0 0 16 16"><path d="M3 1.200h8l3.200 3.200v11h-11.200z" fill="#fdfeff"/><path d="M3 15.400v-14.200h8" fill="none" stroke="#ecc4a8" stroke-width=".9"/><path d="M14.200 4.400v11h-11.200" fill="none" stroke="#9fb2d6" stroke-width="1"/><path d="M10.800 1.200v3.400h3.400z" fill="#f8b878" stroke="#f0a050" stroke-width=".6"/><path d="M11 6.600h-3.800l-2.200 2v2.400l2.200 2h3.800z" fill="none" stroke="#3f8f1f" stroke-width="1.050" stroke-linejoin="round"/><path d="M.4 16L3.7 8.8L7 16z" fill="#f9c24e" stroke="#e08a1e" stroke-width=".9" stroke-linejoin="round"/><rect x="3.1" y="11.3" width=".9" height="2.4" fill="#3a2a00"/><rect x="3.1" y="14.2" width=".9" height=".9" fill="#3a2a00"/></svg></div>
<span id="t33" class="t" style="left:111.7px;top:469.04px;height:16px;line-height:16px;font-size:12px;color:#000;letter-spacing:-0.108px;">barseite.xml</span>
<div style="left:90.5px;top:486.5px;line-height:0"><svg width="16" height="16" viewBox="0 0 16 16"><path d="M3 1.200h8l3.200 3.200v11h-11.200z" fill="#fdfeff"/><path d="M3 15.400v-14.200h8" fill="none" stroke="#ecc4a8" stroke-width=".9"/><path d="M14.200 4.400v11h-11.200" fill="none" stroke="#9fb2d6" stroke-width="1"/><path d="M10.800 1.200v3.400h3.400z" fill="#f8b878" stroke="#f0a050" stroke-width=".6"/><path d="M11 6.600h-3.800l-2.200 2v2.400l2.200 2h3.800z" fill="none" stroke="#3f8f1f" stroke-width="1.050" stroke-linejoin="round"/></svg></div>
<span id="t34" class="t" style="left:111.7px;top:487.04px;height:16px;line-height:16px;font-size:12px;color:#000;letter-spacing:0.110px;">einkauf.xml</span>
<div style="left:90.5px;top:504.5px;line-height:0"><svg width="16" height="16" viewBox="0 0 16 16"><path d="M3 1.200h8l3.200 3.200v11h-11.200z" fill="#fdfeff"/><path d="M3 15.400v-14.200h8" fill="none" stroke="#ecc4a8" stroke-width=".9"/><path d="M14.200 4.400v11h-11.200" fill="none" stroke="#9fb2d6" stroke-width="1"/><path d="M10.800 1.200v3.400h3.400z" fill="#f8b878" stroke="#f0a050" stroke-width=".6"/><path d="M11 6.600h-3.800l-2.200 2v2.400l2.200 2h3.800z" fill="none" stroke="#3f8f1f" stroke-width="1.050" stroke-linejoin="round"/></svg></div>
<span id="t35" class="t" style="left:111.7px;top:505.04px;height:16px;line-height:16px;font-size:12px;color:#000;letter-spacing:-0.355px;">kasse.xml</span>
<div style="left:90.5px;top:522.5px;line-height:0"><svg width="16" height="16" viewBox="0 0 16 16"><path d="M3 1.200h8l3.200 3.200v11h-11.200z" fill="#fdfeff"/><path d="M3 15.400v-14.200h8" fill="none" stroke="#ecc4a8" stroke-width=".9"/><path d="M14.200 4.400v11h-11.200" fill="none" stroke="#9fb2d6" stroke-width="1"/><path d="M10.800 1.200v3.400h3.400z" fill="#f8b878" stroke="#f0a050" stroke-width=".6"/><path d="M11 6.600h-3.800l-2.200 2v2.400l2.200 2h3.800z" fill="none" stroke="#3f8f1f" stroke-width="1.050" stroke-linejoin="round"/></svg></div>
<span id="t36" class="t" style="left:111.7px;top:523.04px;height:16px;line-height:16px;font-size:12px;color:#000;letter-spacing:0.064px;">knechtliste.xml</span>
<div style="left:90.5px;top:540.5px;line-height:0"><svg width="16" height="16" viewBox="0 0 16 16"><path d="M3 1.200h8l3.200 3.200v11h-11.200z" fill="#fdfeff"/><path d="M3 15.400v-14.200h8" fill="none" stroke="#ecc4a8" stroke-width=".9"/><path d="M14.200 4.400v11h-11.200" fill="none" stroke="#9fb2d6" stroke-width="1"/><path d="M10.800 1.200v3.400h3.400z" fill="#f8b878" stroke="#f0a050" stroke-width=".6"/><path d="M11 6.600h-3.800l-2.200 2v2.400l2.200 2h3.800z" fill="none" stroke="#3f8f1f" stroke-width="1.050" stroke-linejoin="round"/></svg></div>
<span id="t37" class="t" style="left:111.7px;top:541.04px;height:16px;line-height:16px;font-size:12px;color:#000;letter-spacing:0.212px;">robi.xml</span>
<div style="left:59px;top:563.0px;line-height:0"><svg width="7" height="10" viewBox="0 0 7 10"><path d="M1 .9L5.8 5L1 9.1z" fill="#fff" stroke="#a6a6a6" stroke-width="1"/></svg></div>
<div style="left:71.5px;top:558.5px;line-height:0"><svg width="16" height="16" viewBox="0 0 16 16"><path d="M1.900 13.700v-8.300q0-1.400 1.400-1.400h2.800l1.500 1.500h4.600v2.500" fill="#fdeec8" stroke="#d8862a" stroke-width="1"/><path d="M1.900 13.800l3.200-4.800h11.100l-3.500 4.800z" fill="#fad490" stroke="#d8862a" stroke-width="1" stroke-linejoin="round"/></svg></div>
<span id="t38" class="t" style="left:92.7px;top:559.04px;height:16px;line-height:16px;font-size:12px;color:#000;letter-spacing:-0.257px;">values</span>
<div style="left:59px;top:581.0px;line-height:0"><svg width="7" height="10" viewBox="0 0 7 10"><path d="M1 .9L5.8 5L1 9.1z" fill="#fff" stroke="#a6a6a6" stroke-width="1"/></svg></div>
<div style="left:71.5px;top:576.5px;line-height:0"><svg width="16" height="16" viewBox="0 0 16 16"><path d="M1.900 13.700v-8.300q0-1.400 1.400-1.400h2.800l1.500 1.500h4.600v2.500" fill="#fdeec8" stroke="#d8862a" stroke-width="1"/><path d="M1.900 13.800l3.200-4.800h11.100l-3.500 4.800z" fill="#fad490" stroke="#d8862a" stroke-width="1" stroke-linejoin="round"/></svg></div>
<span id="t39" class="t" style="left:92.7px;top:577.04px;height:16px;line-height:16px;font-size:12px;color:#000;letter-spacing:-0.105px;">values-v11</span>
<div style="left:59px;top:599.0px;line-height:0"><svg width="7" height="10" viewBox="0 0 7 10"><path d="M1 .9L5.8 5L1 9.1z" fill="#fff" stroke="#a6a6a6" stroke-width="1"/></svg></div>
<div style="left:71.5px;top:594.5px;line-height:0"><svg width="16" height="16" viewBox="0 0 16 16"><path d="M1.900 13.700v-8.300q0-1.400 1.400-1.400h2.800l1.500 1.500h4.600v2.500" fill="#fdeec8" stroke="#d8862a" stroke-width="1"/><path d="M1.900 13.800l3.200-4.800h11.100l-3.500 4.800z" fill="#fad490" stroke="#d8862a" stroke-width="1" stroke-linejoin="round"/></svg></div>
<span id="t40" class="t" style="left:92.7px;top:595.04px;height:16px;line-height:16px;font-size:12px;color:#000;letter-spacing:-0.126px;">values-v14</span>
<div style="left:52.5px;top:612.5px;line-height:0"><svg width="16" height="16" viewBox="0 0 16 16"><path d="M3 1.200h8l3.200 3.200v11h-11.200z" fill="#fdfeff"/><path d="M3 15.400v-14.200h8" fill="none" stroke="#ecc4a8" stroke-width=".9"/><path d="M14.200 4.400v11h-11.200" fill="none" stroke="#9fb2d6" stroke-width="1"/><path d="M10.800 1.200v3.400h3.400z" fill="#f8b878" stroke="#f0a050" stroke-width=".6"/><path d="M11 6.600h-3.800l-2.200 2v2.400l2.200 2h3.800z" fill="none" stroke="#3f8f1f" stroke-width="1.050" stroke-linejoin="round"/><path d="M.4 16L3.7 8.8L7 16z" fill="#f9c24e" stroke="#e08a1e" stroke-width=".9" stroke-linejoin="round"/><rect x="3.1" y="11.3" width=".9" height="2.4" fill="#3a2a00"/><rect x="3.1" y="14.2" width=".9" height=".9" fill="#3a2a00"/></svg></div>
<span id="t41" class="t" style="left:73.7px;top:613.04px;height:16px;line-height:16px;font-size:12px;color:#000;letter-spacing:0.166px;">AndroidManifest.xml</span>
<div style="left:52.5px;top:630.5px;line-height:0"><svg width="16" height="16" viewBox="0 0 16 16"><rect x="1" y="2.800" width="15" height="13" fill="#fff" stroke="#8e8e9c" stroke-width=".9"/><rect x="2.800" y="4.500" width="11.500" height="9.600" fill="#b8281e"/><circle cx="5.800" cy="7.300" r="1.700" fill="#e8c020"/><circle cx="10.800" cy="11.800" r="2.300" fill="#e89818"/><circle cx="11" cy="12" r="1" fill="#3a2a10"/><path d="M10.500 4.500h3.800v4z" fill="#e8e0d8"/><path d="M2.800 11l2.500 3.100h-2.500z" fill="#8a1a14"/></svg></div>
<span id="t42" class="t" style="left:73.7px;top:631.04px;height:16px;line-height:16px;font-size:12px;color:#000;letter-spacing:0.053px;">ic_launcher-web.png</span>
<div style="left:52.5px;top:648.5px;line-height:0"><svg width="16" height="16" viewBox="0 0 16 16"><path d="M4 1.800h7l3.500 3.500v10h-10.500z" fill="#fdfeff" stroke="#b89030" stroke-width="1"/><path d="M11 1.800v3.500h3.500" fill="#f6e3b8" stroke="#c8a048" stroke-width=".7"/><path d="M5.800 5.300h4M5.800 7.500h7M5.800 9.700h7M5.800 11.900h7" stroke="#4a78c8" stroke-width="1"/></svg></div>
<span id="t43" class="t" style="left:73.7px;top:649.04px;height:16px;line-height:16px;font-size:12px;color:#000;letter-spacing:0.181px;">proguard-project.txt</span>
<div style="left:480px;top:80px;width:1040px;height:600px;background:#fff;border:1px solid #c3cde0;border-radius:5px 0 0 0;box-sizing:border-box"></div>
<div style="left:481px;top:81px;width:1030px;height:25px;background:#d3e0f3;border-bottom:1px solid #b9c6dc;box-sizing:border-box;border-radius:4px 0 0 0"></div>
<div style="left:480px;top:80px;width:117px;height:27px;background:#fff;border:1px solid #c3cde0;border-bottom:none;border-radius:5px 5px 0 0;box-sizing:border-box"></div>
<div style="left:483.5px;top:85px;line-height:0"><svg width="16" height="16" viewBox="0 0 16 16"><path d="M3 1.200h8l3.200 3.200v11h-11.200z" fill="#fdfeff"/><path d="M3 15.400v-14.200h8" fill="none" stroke="#ecc4a8" stroke-width=".9"/><path d="M14.200 4.400v11h-11.200" fill="none" stroke="#9fb2d6" stroke-width="1"/><path d="M10.800 1.200v3.400h3.400z" fill="#f8b878" stroke="#f0a050" stroke-width=".6"/><path d="M11 6.600h-3.800l-2.200 2v2.400l2.200 2h3.800z" fill="none" stroke="#3f8f1f" stroke-width="1.050" stroke-linejoin="round"/></svg></div>
<span id="t44" class="t" style="left:502.9px;top:86.04px;height:16px;line-height:16px;font-size:12px;color:#111;letter-spacing:-0.097px;">*barseite.xml</span>
<div style="left:600.5px;top:85px;line-height:0"><svg width="16" height="16" viewBox="0 0 16 16"><path d="M3 1.200h8l3.200 3.200v11h-11.200z" fill="#fdfeff"/><path d="M3 15.400v-14.200h8" fill="none" stroke="#ecc4a8" stroke-width=".9"/><path d="M14.200 4.400v11h-11.200" fill="none" stroke="#9fb2d6" stroke-width="1"/><path d="M10.800 1.200v3.400h3.400z" fill="#f8b878" stroke="#f0a050" stroke-width=".6"/><path d="M11 6.600h-3.800l-2.200 2v2.400l2.200 2h3.800z" fill="none" stroke="#3f8f1f" stroke-width="1.050" stroke-linejoin="round"/></svg></div>
<span id="t45" class="t" style="left:619.4px;top:86.04px;height:16px;line-height:16px;font-size:12px;color:#111;letter-spacing:0.120px;">einkauf.xml</span>
<div style="left:710.5px;top:85px;line-height:0"><svg width="16" height="16" viewBox="0 0 16 16"><path d="M3 1.200h8l3.200 3.200v11h-11.200z" fill="#fdfeff"/><path d="M3 15.400v-14.200h8" fill="none" stroke="#ecc4a8" stroke-width=".9"/><path d="M14.200 4.400v11h-11.200" fill="none" stroke="#9fb2d6" stroke-width="1"/><path d="M10.800 1.200v3.400h3.400z" fill="#f8b878" stroke="#f0a050" stroke-width=".6"/><path d="M11 6.600h-3.800l-2.200 2v2.400l2.200 2h3.800z" fill="none" stroke="#3f8f1f" stroke-width="1.050" stroke-linejoin="round"/></svg></div>
<span id="t46" class="t" style="left:730.4px;top:86.04px;height:16px;line-height:16px;font-size:12px;color:#111;letter-spacing:-0.418px;">kasse.xml</span>
<div style="left:808.5px;top:85px;line-height:0"><svg width="16" height="16" viewBox="0 0 16 16"><path d="M3 1.200h8l3.200 3.200v11h-11.200z" fill="#fdfeff"/><path d="M3 15.400v-14.200h8" fill="none" stroke="#ecc4a8" stroke-width=".9"/><path d="M14.200 4.400v11h-11.200" fill="none" stroke="#9fb2d6" stroke-width="1"/><path d="M10.800 1.200v3.400h3.400z" fill="#f8b878" stroke="#f0a050" stroke-width=".6"/><path d="M11 6.600h-3.800l-2.200 2v2.400l2.200 2h3.800z" fill="none" stroke="#3f8f1f" stroke-width="1.050" stroke-linejoin="round"/></svg></div>
<span id="t47" class="t" style="left:828.9px;top:86.04px;height:16px;line-height:16px;font-size:12px;color:#111;letter-spacing:0.035px;">knechtliste.xml</span>
<div style="left:936.5px;top:85px;line-height:0"><svg width="16" height="16" viewBox="0 0 16 16"><path d="M3 1.200h8l3.200 3.200v11h-11.200z" fill="#fdfeff"/><path d="M3 15.400v-14.200h8" fill="none" stroke="#ecc4a8" stroke-width=".9"/><path d="M14.200 4.400v11h-11.200" fill="none" stroke="#9fb2d6" stroke-width="1"/><path d="M10.800 1.200v3.400h3.400z" fill="#f8b878" stroke="#f0a050" stroke-width=".6"/><path d="M11 6.600h-3.800l-2.200 2v2.400l2.200 2h3.800z" fill="none" stroke="#3f8f1f" stroke-width="1.050" stroke-linejoin="round"/></svg></div>
<span id="t48" class="t" style="left:956.6px;top:86.04px;height:16px;line-height:16px;font-size:12px;color:#111;letter-spacing:0.212px;">robi.xml</span>
<div style="left:1028.5px;top:85px;line-height:0"><svg width="16" height="16" viewBox="0 0 16 16"><path d="M3 1.200h8l3.200 3.200v11h-11.200z" fill="#fdfeff"/><path d="M3 15.400v-14.200h8" fill="none" stroke="#ecc4a8" stroke-width=".9"/><path d="M14.200 4.400v11h-11.200" fill="none" stroke="#9fb2d6" stroke-width="1"/><path d="M10.800 1.200v3.400h3.400z" fill="#f8b878" stroke="#f0a050" stroke-width=".6"/><path d="M11 6.600h-3.800l-2.200 2v2.400l2.200 2h3.800z" fill="none" stroke="#3f8f1f" stroke-width="1.050" stroke-linejoin="round"/></svg></div>
<span id="t49" class="t" style="left:1048.5px;top:86.04px;height:16px;line-height:16px;font-size:12px;color:#111;letter-spacing:0.078px;">activity_main.xml</span>
<div style="left:1167.5px;top:85px;line-height:0"><svg width="16" height="16" viewBox="0 0 16 16"><path d="M4 1.800h7l3.500 3.500v10h-10.500z" fill="#fdfeff" stroke="#a87830" stroke-width="1"/><path d="M11 1.800v3.500h3.500" fill="#f6e3b8" stroke="#c89848" stroke-width=".7"/><path d="M10.200 5v5.700a2 2 0 0 1-3.700 .9" stroke="#2a5db0" stroke-width="1.800" fill="none"/><path d="M8 5h3" stroke="#2a5db0" stroke-width="1"/><path d="M.4 16L3.7 8.8L7 16z" fill="#f9c24e" stroke="#e08a1e" stroke-width=".9" stroke-linejoin="round"/><rect x="3.1" y="11.3" width=".9" height="2.4" fill="#3a2a00"/><rect x="3.1" y="14.2" width=".9" height=".9" fill="#3a2a00"/></svg></div>
<span id="t50" class="t" style="left:1189.8000000000002px;top:86.04px;height:16px;line-height:16px;font-size:12px;color:#111;letter-spacing:0.201px;">MainActivity.java</span>
<div style="left:1309.5px;top:85px;line-height:0"><svg width="16" height="16" viewBox="0 0 16 16"><path d="M4 1.800h7l3.500 3.500v10h-10.500z" fill="#fdfeff" stroke="#a87830" stroke-width="1"/><path d="M11 1.800v3.500h3.500" fill="#f6e3b8" stroke="#c89848" stroke-width=".7"/><path d="M10.200 5v5.700a2 2 0 0 1-3.700 .9" stroke="#2a5db0" stroke-width="1.800" fill="none"/><path d="M8 5h3" stroke="#2a5db0" stroke-width="1"/></svg></div>
<span id="t51" class="t" style="left:1330.6000000000001px;top:86.04px;height:16px;line-height:16px;font-size:12px;color:#111;letter-spacing:0.024px;">BarActivity.java</span>
<div style="left:1440.5px;top:85px;line-height:0"><svg width="16" height="16" viewBox="0 0 16 16"><path d="M3 1.200h8l3.200 3.200v11h-11.200z" fill="#fdfeff"/><path d="M3 15.400v-14.200h8" fill="none" stroke="#ecc4a8" stroke-width=".9"/><path d="M14.200 4.400v11h-11.200" fill="none" stroke="#9fb2d6" stroke-width="1"/><path d="M10.800 1.200v3.400h3.400z" fill="#f8b878" stroke="#f0a050" stroke-width=".6"/><path d="M11 6.600h-3.800l-2.200 2v2.400l2.200 2h3.800z" fill="none" stroke="#3f8f1f" stroke-width="1.050" stroke-linejoin="round"/></svg></div>
<span id="t52" class="t" style="left:1462.3px;top:86.04px;height:16px;line-height:16px;font-size:12px;color:#111;">bar Manifest</span>
<div style="left:578.5px;top:88.5px;line-height:0"><svg width="11" height="11" viewBox="0 0 11 11"><path d="M1 2.5L2.5 1L5.5 4L8.5 1L10 2.5L7 5.5L10 8.5L8.5 10L5.5 7L2.5 10L1 8.5L4 5.5Z" fill="#fff" stroke="#3c3c3c" stroke-width=".9"/></svg></div>
<div style="left:498.5px;top:119px;line-height:0"><svg width="16" height="16" viewBox="0 0 16 16"><path d="M3 1.200h8l3.200 3.200v11h-11.200z" fill="#fdfeff"/><path d="M3 15.400v-14.200h8" fill="none" stroke="#ecc4a8" stroke-width=".9"/><path d="M14.200 4.400v11h-11.200" fill="none" stroke="#9fb2d6" stroke-width="1"/><path d="M10.800 1.200v3.400h3.400z" fill="#f8b878" stroke="#f0a050" stroke-width=".6"/><path d="M11 6.600h-3.800l-2.200 2v2.400l2.200 2h3.800z" fill="none" stroke="#3f8f1f" stroke-width="1.050" stroke-linejoin="round"/></svg></div>
<div style="left:525px;top:126px;width:0;height:0;border-left:3.5px solid transparent;border-right:3.5px solid transparent;border-top:4px solid #111"></div>
<div style="left:538px;top:115px;width:1px;height:26px;background:#8c8c8c"></div>
<div style="left:551px;top:119.5px;line-height:0"><svg width="15" height="16" viewBox="0 0 15 16"><rect x="2.5" y=".5" width="10" height="15" rx="2.2" fill="#a8d3b8" stroke="#606870" stroke-width="1.1"/></svg></div>
<span id="t53" class="t" style="left:570.4px;top:120.04px;height:16px;line-height:16px;font-size:12px;color:#111;letter-spacing:-0.272px;">Nexus 7</span>
<div style="left:626px;top:126px;width:0;height:0;border-left:3.5px solid transparent;border-right:3.5px solid transparent;border-top:4px solid #111"></div>
<div style="left:639px;top:115px;width:1px;height:26px;background:#8c8c8c"></div>
<div style="left:652px;top:119.5px;line-height:0"><svg width="16" height="16" viewBox="0 0 16 16"><rect x="3" y=".6" width="10.500" height="15" rx="2.200" fill="#fff" stroke="#3c3c3c" stroke-width="1.100"/><rect x="5" y="2.800" width="6.500" height="10.500" fill="#fff" stroke="#777" stroke-width=".7"/><path d="M4.500 9.300a4 3.600 0 0 1 8 -.3" stroke="#1f8a2a" stroke-width="1.300" fill="none"/><path d="M2.300 7.800l2.400 3.200 1.900-3.400z" fill="#1f8a2a"/></svg></div>
<div style="left:679px;top:126px;width:0;height:0;border-left:3.5px solid transparent;border-right:3.5px solid transparent;border-top:4px solid #111"></div>
<div style="left:692px;top:115px;width:1px;height:26px;background:#8c8c8c"></div>
<div style="left:705px;top:119px;line-height:0"><svg width="16" height="16" viewBox="0 0 16 16"><path d="M8 .8l2.2 4.9 5.3.5-4 3.6 1.2 5.3L8 12.3l-4.7 2.8 1.2-5.3-4-3.6 5.3-.5z" fill="#8a8a8a"/><path d="M8 3.2l1.5 3.4 3.6.3-2.7 2.5.8 3.6L8 11.1z" fill="#bdbdbd"/><path d="M8 3.2L6.5 6.6l-3.6.3 2.7 2.5-.8 3.6L8 11.1z" fill="#3aa0d8"/></svg></div>
<span id="t54" class="t" style="left:724.4px;top:120.04px;height:16px;line-height:16px;font-size:12px;color:#111;letter-spacing:0.214px;">AppTheme</span>
<div style="left:797.5px;top:126px;width:0;height:0;border-left:3.5px solid transparent;border-right:3.5px solid transparent;border-top:4px solid #111"></div>
<div style="left:811px;top:115px;width:1px;height:26px;background:#8c8c8c"></div>
<div style="left:824.5px;top:119.5px;line-height:0"><svg width="16" height="16" viewBox="0 0 16 16"><circle cx="8" cy="8" r="7" fill="#2f9e3f"/><circle cx="8" cy="8" r="5.8" fill="#4fbf5a"/><path d="M10.8 6a3.6 3.6 0 1 0 0 4" stroke="#fff" stroke-width="1.9" fill="none"/></svg></div>
<span id="t55" class="t" style="left:843.4px;top:120.04px;height:16px;line-height:16px;font-size:12px;color:#111;letter-spacing:0.344px;">MainActivity</span>
<div style="left:925px;top:126px;width:0;height:0;border-left:3.5px solid transparent;border-right:3.5px solid transparent;border-top:4px solid #111"></div>
<div style="left:938px;top:115px;width:1px;height:26px;background:#8c8c8c"></div>
<div style="left:952.5px;top:119.5px;line-height:0"><svg width="16" height="16" viewBox="0 0 16 16"><circle cx="8" cy="8" r="7.3" fill="#2f9be0"/><circle cx="6.3" cy="5.5" r="4.2" fill="#7fd0f7" opacity=".8"/><path d="M4 4.5c2-1.5 4-.5 4.5 1s-1 2-.5 3.5 2 1.5 1.5 3-2.5 1.5-3.5.5-.5-2.5-1.5-3.5-1.5-3-.5-4.5z" fill="#3f8f3a"/><path d="M11 3c1.5.5 3 2 3 4s-1 2-2 1-1.5-3-1-5z" fill="#4a9a40"/></svg></div>
<div style="left:977.5px;top:126px;width:0;height:0;border-left:3.5px solid transparent;border-right:3.5px solid transparent;border-top:4px solid #111"></div>
<div style="left:991px;top:115px;width:1px;height:26px;background:#8c8c8c"></div>
<div style="left:1003.5px;top:119.5px;line-height:0"><svg width="16" height="16" viewBox="0 0 16 16"><path d="M3.5 5.5a4.5 4 0 0 1 9 0z" fill="#a4c639"/><path d="M5 1l1 1.8M11 1l-1 1.8" stroke="#a4c639" stroke-width=".8"/><rect x="3.5" y="6" width="9" height="6.8" rx="1" fill="#a4c639"/><rect x="1" y="6" width="1.9" height="5.2" rx=".95" fill="#a4c639"/><rect x="13.1" y="6" width="1.9" height="5.2" rx=".95" fill="#a4c639"/><rect x="5.2" y="12" width="1.9" height="3.6" rx=".95" fill="#a4c639"/><rect x="8.9" y="12" width="1.9" height="3.6" rx=".95" fill="#a4c639"/><circle cx="6.2" cy="3.7" r=".55" fill="#fff"/><circle cx="9.8" cy="3.7" r=".55" fill="#fff"/></svg></div>
<span id="t56" class="t" style="left:1023.45px;top:120.39px;height:16px;line-height:16px;font-size:11px;color:#111;letter-spacing:0.450px;">20</span>
<div style="left:1050px;top:126px;width:0;height:0;border-left:3.5px solid transparent;border-right:3.5px solid transparent;border-top:4px solid #111"></div>
<div style="left:491px;top:153px;width:29px;height:30px;background:#cbe3f9;border:1px solid #66a7e8;box-sizing:border-box"></div>
<div style="left:520px;top:153px;width:29px;height:30px;background:#cbe3f9;border:1px solid #66a7e8;box-sizing:border-box"></div>
<div style="left:498px;top:160px;line-height:0"><svg width="15" height="15" viewBox="0 0 15 15"><rect x=".5" y=".5" width="14" height="14" fill="#f2f2f2" stroke="#555"/><path d="M1.5 13.5h12v-12" stroke="#bdbdbd" fill="none"/><path d="M3 7.5h9M5 5.5L3 7.5l2 2M10 5.5l2 2-2 2" stroke="#222" stroke-width="1.1" fill="none"/></svg></div>
<div style="left:527px;top:160px;line-height:0"><svg width="15" height="15" viewBox="0 0 15 15"><rect x=".5" y=".5" width="14" height="14" fill="#f2f2f2" stroke="#555"/><path d="M1.5 13.5h12v-12" stroke="#bdbdbd" fill="none"/><path d="M7.5 3v9M5.5 5L7.5 3l2 2M5.5 10l2 2 2-2" stroke="#222" stroke-width="1.1" fill="none"/></svg></div>
<div style="left:551px;top:155px;width:1px;height:25px;background:#8c8c8c"></div>
<div style="left:570px;top:160px;line-height:0"><svg width="15" height="15" viewBox="0 0 15 15"><rect x=".5" y=".5" width="14" height="14" fill="#f2f2f2" stroke="#555"/><path d="M1.5 13.5h12v-12" stroke="#bdbdbd" fill="none"/><rect x="3.5" y="3.5" width="8" height="8" fill="none" stroke="#555" stroke-dasharray="1.5 1"/></svg></div>
<div style="left:600px;top:160px;line-height:0"><svg width="15" height="15" viewBox="0 0 15 15"><rect x=".5" y=".5" width="14" height="14" fill="#f2f2f2" stroke="#555"/><path d="M1.5 13.5h12v-12" stroke="#bdbdbd" fill="none"/><path d="M3 3l3.5 3.5M12 3L8.5 6.5M3 12l3.5-3.5M12 12L8.5 8.5" stroke="#444" stroke-width="1"/><path d="M3 5.5V3h2.5M9.5 3H12v2.5M3 9.5V12h2.5M9.5 12H12V9.5" stroke="#444" fill="none" stroke-width=".9"/></svg></div>
<div style="left:626px;top:165.5px;width:0;height:0;border-left:3.5px solid transparent;border-right:3.5px solid transparent;border-top:4px solid #111"></div>
<div style="left:639px;top:155px;width:1px;height:25px;background:#8c8c8c"></div>
<div style="left:652px;top:153px;width:29px;height:30px;background:#cbe3f9;border:1px solid #66a7e8;box-sizing:border-box"></div>
<div style="left:659px;top:160px;line-height:0"><svg width="15" height="15" viewBox="0 0 15 15"><rect x=".5" y=".5" width="14" height="14" fill="#f2f2f2" stroke="#555"/><path d="M1.5 13.5h12v-12" stroke="#bdbdbd" fill="none"/><rect x="3.5" y="3.5" width="4" height="3" fill="#fff" stroke="#555" stroke-width=".9"/><path d="M4.5 11.5h7M4.5 11.5v-4M3 9l1.5-1.8L6 9" stroke="#333" fill="none" stroke-width=".9"/><rect x="9" y="9" width="4" height="4" fill="#bbb"/></svg></div>
<div style="left:687.5px;top:160px;line-height:0"><svg width="15" height="15" viewBox="0 0 15 15"><rect x=".5" y=".5" width="14" height="14" fill="#f2f2f2" stroke="#555"/><path d="M1.5 13.5h12v-12" stroke="#bdbdbd" fill="none"/><rect x="5.5" y="2.5" width="6" height="5" fill="#fff" stroke="#555" stroke-width=".9"/><rect x="3.5" y="5.5" width="6" height="6" fill="#f5f5f5" stroke="#444" stroke-width=".9"/><path d="M8 1.5l-2 1.5 2 1.5" stroke="#333" fill="none" stroke-width=".9"/><rect x="9" y="9" width="4" height="4" fill="#bbb"/></svg></div>
<div style="left:486px;top:188px;width:1030px;height:480px;background:#9b9b9c;border:1px solid #97a6bc;box-shadow:inset 0 0 0 1px #fff;box-sizing:border-box"></div>
<div style="left:513px;top:202px;width:273px;height:437px;background:#000;box-shadow:10px 9px 4px 0 rgba(0,0,0,.38),5px 5px 5px 0 rgba(0,0,0,.24)"></div>
<div style="left:513px;top:202px;width:273px;height:11px;background:#000"></div>
<div style="left:513px;top:213px;width:273px;height:25.5px;background:#262626"></div>
<div style="left:521px;top:217.5px;line-height:0"><svg width="17" height="17" viewBox="0 0 17 17"><rect x=".3" y=".3" width="16" height="16" rx="3.600" fill="#fff"/><path d="M5.300 4.300h6" stroke="#a82a2a" stroke-width="1.300"/><path d="M8.300 4.500v7.600" stroke="#c8a0a8" stroke-width="1.100"/><path d="M8.300 5v2" stroke="#b04040" stroke-width="1.100"/><path d="M6.600 12.600h3.400" stroke="#7a7f88" stroke-width="1"/></svg></div>
<span id="t57" class="t" style="left:542.42px;top:218.57px;height:16px;line-height:16px;font-size:7.6px;color:#e8e8e8;letter-spacing:0.388px;">bar</span>
<div style="left:513px;top:238.5px;width:273px;height:379px;background:#fff"></div>
<div style="left:768.300px;top:202.600px;line-height:0"><svg width="16" height="8" viewBox="0 0 16 8"><path d="M0 1.5Q4 -1.5 8 1.5L4 7z" fill="#33b5e5"/><rect x="10" y=".5" width="4" height="7" fill="#33b5e5"/><rect x="11" y="2" width="2" height="4" fill="#bfe9fa"/></svg></div>
<div style="left:636.5px;top:292px;width:26px;height:17.5px;background:#d6d6d6;border-bottom:1px solid #bdbdbd;box-sizing:border-box;border-radius:1px"></div>
<span id="t58" class="t" style="left:643.975px;top:293.25px;height:16px;line-height:16px;font-size:8.5px;color:#222;letter-spacing:-0.013px;">2cl</span>
<span id="t59" class="t" style="left:516.4px;top:354.74px;height:16px;line-height:16px;font-size:10px;color:#111;letter-spacing:0.021px;">Item 1</span>
<span id="t60" class="t" style="left:516.5749999999999px;top:363.95px;height:16px;line-height:16px;font-size:6.5px;color:#333;letter-spacing:-0.154px;">Sub Item 1</span>
<div style="left:513px;top:382px;width:270px;height:1px;background:repeating-linear-gradient(to right,#dedede 0 1px,#fff 1px 2.500px)"></div>
<span id="t61" class="t" style="left:516.4px;top:384.74px;height:16px;line-height:16px;font-size:10px;color:#111;letter-spacing:0.021px;">Item 2</span>
<span id="t62" class="t" style="left:516.5749999999999px;top:393.95px;height:16px;line-height:16px;font-size:6.5px;color:#333;letter-spacing:-0.154px;">Sub Item 2</span>
<div style="left:513px;top:412px;width:270px;height:1px;background:repeating-linear-gradient(to right,#dedede 0 1px,#fff 1px 2.500px)"></div>
<span id="t63" class="t" style="left:516.4px;top:413.74px;height:16px;line-height:16px;font-size:10px;color:#111;letter-spacing:0.021px;">Item 3</span>
<span id="t64" class="t" style="left:516.5749999999999px;top:422.95px;height:16px;line-height:16px;font-size:6.5px;color:#333;letter-spacing:-0.154px;">Sub Item 3</span>
<div style="left:513px;top:441px;width:270px;height:1px;background:repeating-linear-gradient(to right,#dedede 0 1px,#fff 1px 2.500px)"></div>
<span id="t65" class="t" style="left:516.4px;top:443.74px;height:16px;line-height:16px;font-size:10px;color:#111;letter-spacing:0.021px;">Item 4</span>
<span id="t66" class="t" style="left:516.5749999999999px;top:452.95px;height:16px;line-height:16px;font-size:6.5px;color:#333;letter-spacing:-0.154px;">Sub Item 4</span>
<div style="left:513px;top:471px;width:270px;height:1px;background:repeating-linear-gradient(to right,#dedede 0 1px,#fff 1px 2.500px)"></div>
<span id="t67" class="t" style="left:516.4px;top:472.74px;height:16px;line-height:16px;font-size:10px;color:#111;letter-spacing:0.021px;">Item 5</span>
<span id="t68" class="t" style="left:516.5749999999999px;top:481.95px;height:16px;line-height:16px;font-size:6.5px;color:#333;letter-spacing:-0.154px;">Sub Item 5</span>
<div style="left:513px;top:500px;width:270px;height:1px;background:repeating-linear-gradient(to right,#dedede 0 1px,#fff 1px 2.500px)"></div>
<span id="t69" class="t" style="left:516.4px;top:502.74px;height:16px;line-height:16px;font-size:10px;color:#111;letter-spacing:0.021px;">Item 6</span>
<span id="t70" class="t" style="left:516.5749999999999px;top:511.95px;height:16px;line-height:16px;font-size:6.5px;color:#333;letter-spacing:-0.154px;">Sub Item 6</span>
<div style="left:513px;top:530px;width:270px;height:1px;background:repeating-linear-gradient(to right,#dedede 0 1px,#fff 1px 2.500px)"></div>
<span id="t71" class="t" style="left:516.4px;top:531.74px;height:16px;line-height:16px;font-size:10px;color:#111;letter-spacing:0.021px;">Item 7</span>
<span id="t72" class="t" style="left:516.5749999999999px;top:540.95px;height:16px;line-height:16px;font-size:6.5px;color:#333;letter-spacing:-0.154px;">Sub Item 7</span>
<div style="left:513px;top:559px;width:270px;height:1px;background:repeating-linear-gradient(to right,#dedede 0 1px,#fff 1px 2.500px)"></div>
<span id="t73" class="t" style="left:516.4px;top:561.74px;height:16px;line-height:16px;font-size:10px;color:#111;letter-spacing:0.021px;">Item 8</span>
<span id="t74" class="t" style="left:516.5749999999999px;top:570.95px;height:16px;line-height:16px;font-size:6.5px;color:#333;letter-spacing:-0.154px;">Sub Item 8</span>
<div style="left:513px;top:589px;width:270px;height:1px;background:repeating-linear-gradient(to right,#dedede 0 1px,#fff 1px 2.500px)"></div>
<div style="left:783px;top:354px;width:1px;height:163px;background:#b0b0b0"></div>
<div style="left:515px;top:597.3px;width:38.5px;height:18.3px;background:#d6d6d6;border-bottom:1px solid #c4c4c4;box-sizing:border-box"></div>
<span id="t75" class="t" style="left:518.3100000000001px;top:598.50px;height:16px;line-height:16px;font-size:7.8px;color:#222;letter-spacing:0.117px;">&lt; Zurück</span>
<div style="left:743.3px;top:597.3px;width:40.7px;height:18.3px;background:#d6d6d6;border-bottom:1px solid #c4c4c4;box-sizing:border-box"></div>
<span id="t76" class="t" style="left:746.91px;top:598.50px;height:16px;line-height:16px;font-size:7.8px;color:#222;letter-spacing:0.153px;">Buchen!!!</span>
<div style="left:546.3px;top:607.8px;line-height:0"><svg width="9" height="8" viewBox="0 0 9 8"><path d="M.5 7.5L4.5 .5l4 7z" fill="#f2c230" stroke="#b8860b" stroke-width=".7"/><rect x="4.1" y="3" width=".8" height="2.4" fill="#3a2a00"/><rect x="4.1" y="6" width=".8" height=".8" fill="#3a2a00"/></svg></div>
<div style="left:776.8px;top:607.8px;line-height:0"><svg width="9" height="8" viewBox="0 0 9 8"><path d="M.5 7.5L4.5 .5l4 7z" fill="#f2c230" stroke="#b8860b" stroke-width=".7"/><rect x="4.1" y="3" width=".8" height="2.4" fill="#3a2a00"/><rect x="4.1" y="6" width=".8" height=".8" fill="#3a2a00"/></svg></div>
<div style="left:513px;top:617px;width:273px;height:22px;background:#000"></div>
<div style="left:606px;top:621px;line-height:0"><svg width="90" height="14" viewBox="0 0 90 14"><path d="M11.5 1.5v10L2.5 6.5z" fill="none" stroke="#eee" stroke-width="1.2"/><circle cx="43" cy="6.8" r="5" fill="none" stroke="#eee" stroke-width="1.2"/><rect x="75" y="2" width="9.5" height="9.5" fill="none" stroke="#eee" stroke-width="1.2"/></svg></div>
</div></body></html>
